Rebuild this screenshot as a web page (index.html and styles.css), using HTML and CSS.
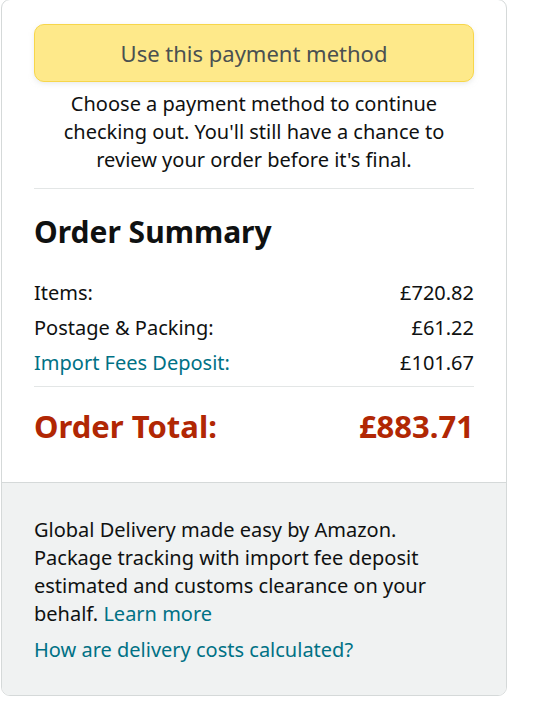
FILE: index.html
```html
<!DOCTYPE html>
<html lang="en">
<head>
<meta charset="utf-8">
<title>Order Summary</title>
<link rel="stylesheet" href="styles.css">
</head>
<body>
<div class="card">
  <div class="main">
    <button class="pay-btn" type="button">Use this payment method</button>
    <p class="note">Choose a payment method to continue checking out. You'll still have a chance to review your order before it's final.</p>
    <hr class="divider">
    <h2 class="title">Order Summary</h2>
    <div class="rows">
      <div class="row"><span>Items:</span><span>£720.82</span></div>
      <div class="row"><span>Postage &amp; Packing:</span><span>£61.22</span></div>
      <div class="row"><a class="link" href="#">Import Fees Deposit:</a><span>£101.67</span></div>
    </div>
    <hr class="divider divider-tight">
    <div class="total"><span>Order Total:</span><span>£883.71</span></div>
  </div>
  <div class="foot">
    <p class="foot-text">Global Delivery made easy by Amazon. Package tracking with import fee deposit estimated and customs clearance on your behalf. <a class="link" href="#">Learn more</a></p>
    <p class="foot-link"><a class="link" href="#">How are delivery costs calculated?</a></p>
  </div>
</div>
</body>
</html>
```
FILE: styles.css
```css
* { box-sizing: border-box; }
html, body { margin: 0; padding: 0; background: #fff; }
body {
  font-family: "Noto Sans", "Open Sans", Arial, sans-serif;
  color: #0F1111;
  font-size: 20px;
  line-height: 28px;
}
.card {
  width: 506px;
  margin: -1px 0 0 1px;
  border: 1px solid #D5D9D9;
  border-radius: 9px;
  overflow: hidden;
  background: #fff;
}
.main {
  padding: 24px 32px 36px;
}
.pay-btn {
  display: block;
  width: 100%;
  height: 58px;
  margin: 0;
  padding: 0;
  border: 1px solid #F7D64A;
  border-radius: 10px;
  background: #FEE98A;
  box-shadow: 0 2px 5px rgba(213, 217, 217, 0.5);
  font-family: inherit;
  font-size: 22px;
  color: #4A5051;
  cursor: pointer;
}
.note {
  margin: 8px 0 0;
  text-align: center;
}
.divider {
  margin: 14px 0 0;
  border: 0;
  border-top: 1px solid #E3E6E6;
  height: 0;
}
.title {
  margin: 25px 0 0;
  font-size: 30px;
  line-height: 36px;
  font-weight: 700;
}
.rows {
  margin-top: 29px;
  display: flex;
  flex-direction: column;
  gap: 7px;
}
.row, .total {
  display: flex;
  justify-content: space-between;
}
.link {
  color: #007185;
  text-decoration: none;
}
.divider-tight {
  margin-top: 9px;
}
.total {
  margin-top: 19px;
  font-size: 31px;
  line-height: 40px;
  font-weight: 700;
  color: #B12704;
}
.foot {
  border-top: 1px solid #D5D9D9;
  background: #F0F2F2;
  padding: 33px 32px 31px;
}
.foot-text { margin: 0; }
.foot-link { margin: 8px 0 0; }
```
